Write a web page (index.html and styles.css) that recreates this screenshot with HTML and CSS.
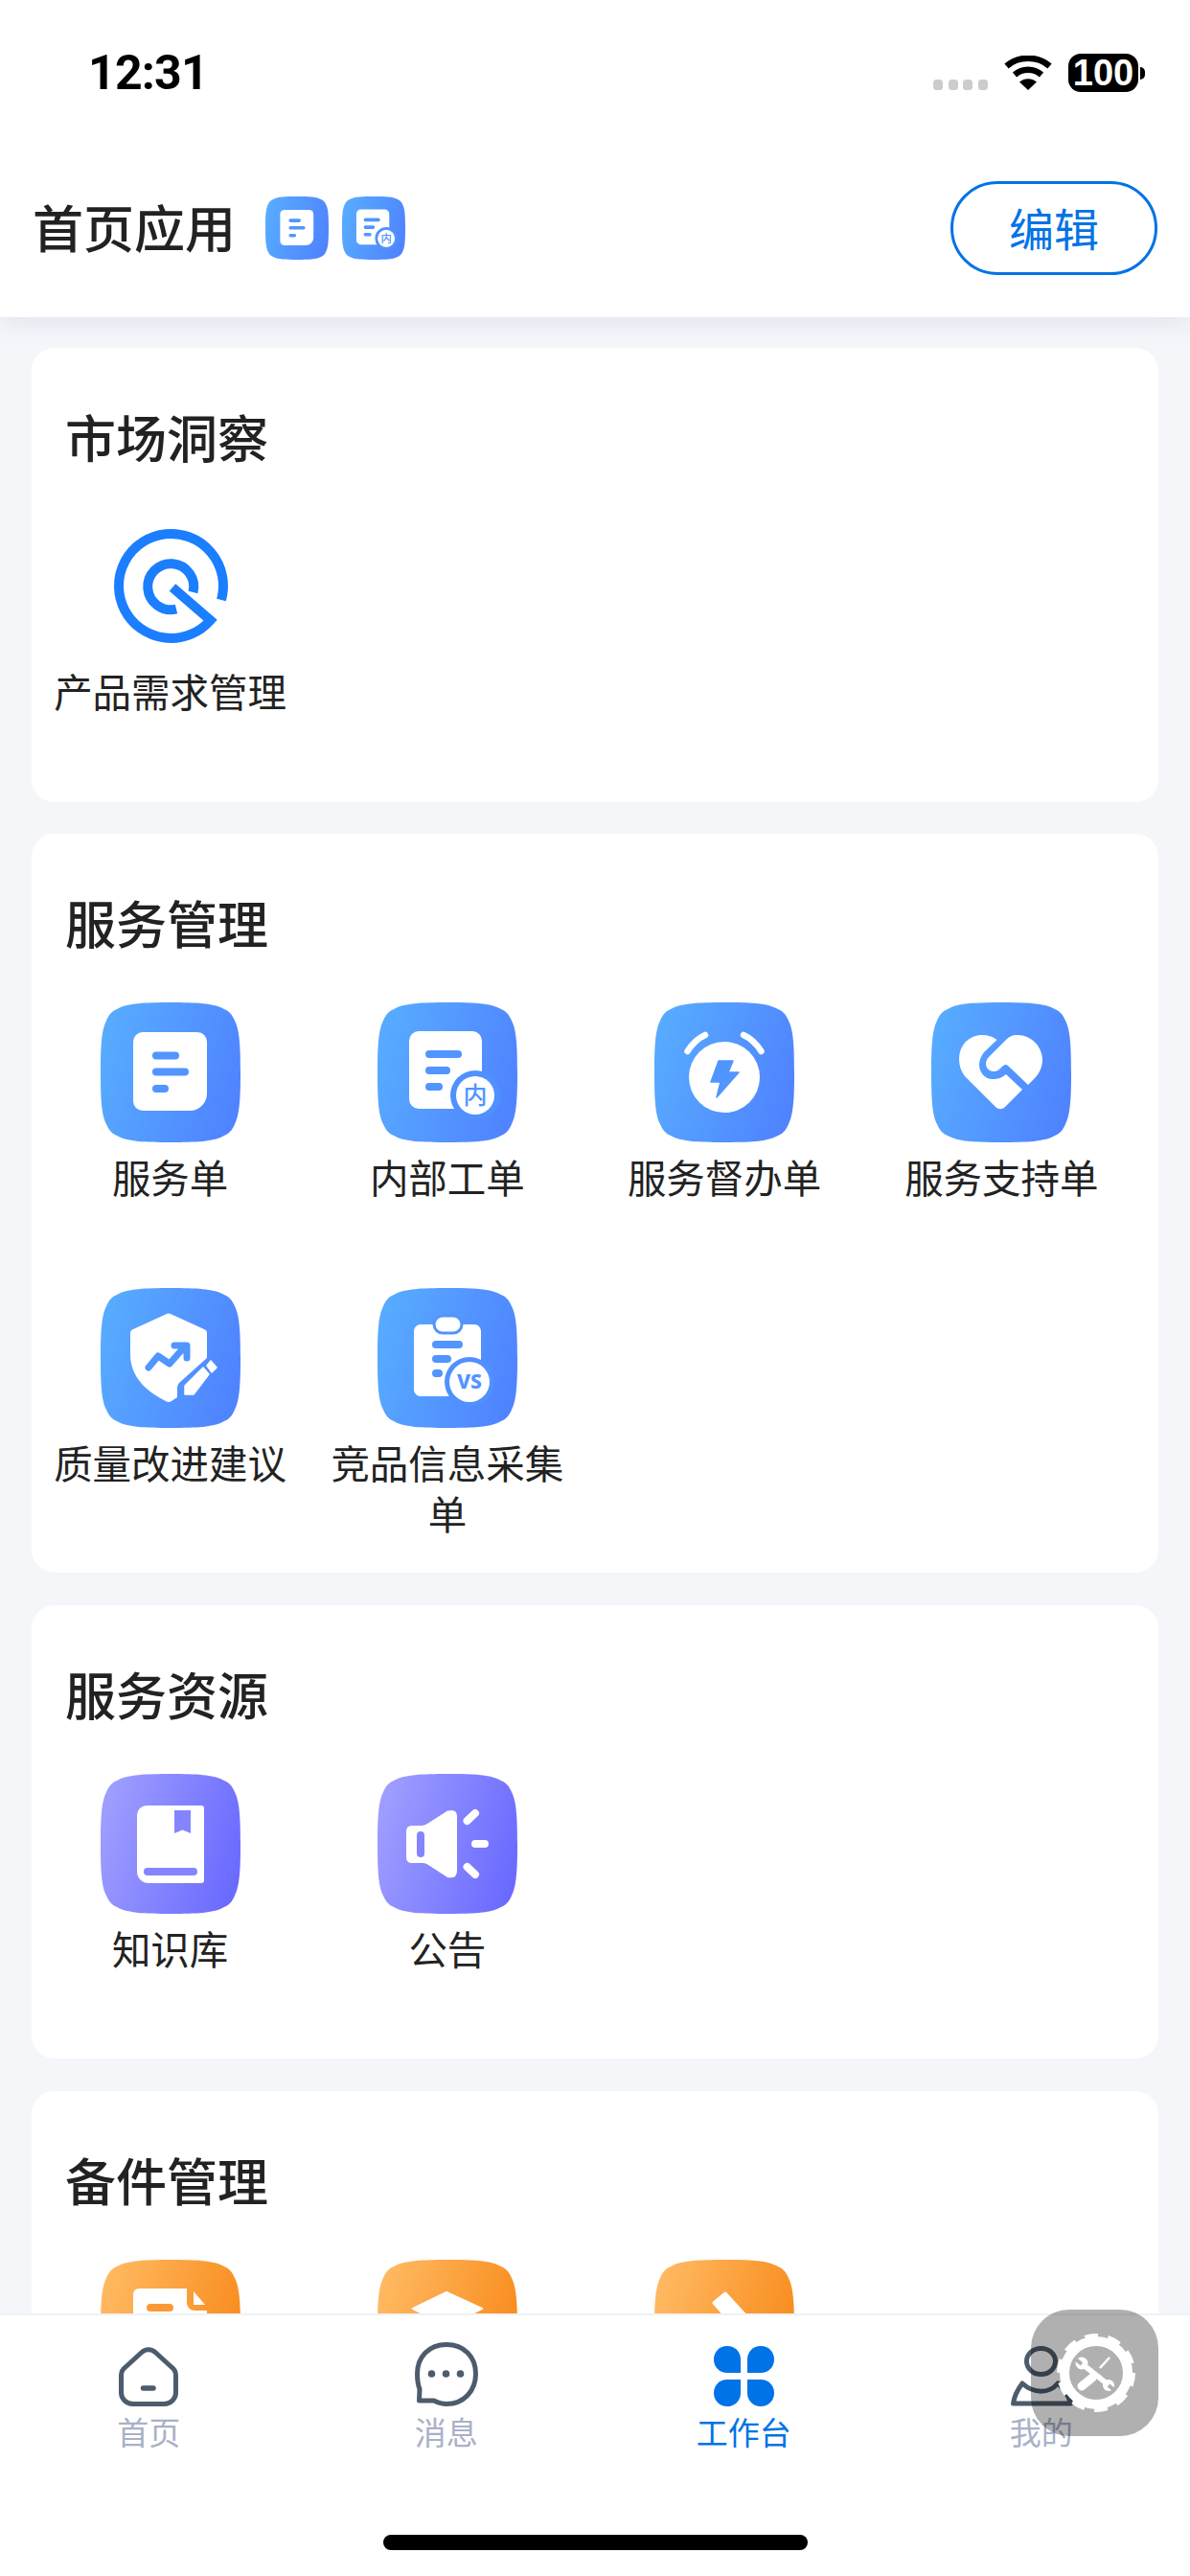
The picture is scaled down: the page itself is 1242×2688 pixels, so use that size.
FILE: index.html
```html
<!DOCTYPE html>
<html lang="zh-CN">
<head>
<meta charset="utf-8">
<title>工作台</title>
<link rel="stylesheet" href="styles.css">
</head>
<body>
<svg class="defs" aria-hidden="true">
  <defs>
    <linearGradient id="g-blue" x1="0" y1="0.35" x2="1" y2="0.65"><stop offset="0" stop-color="#57abff"/><stop offset="1" stop-color="#4f83ff"/></linearGradient>
    <linearGradient id="g-purple" x1="0" y1="0.35" x2="1" y2="0.65"><stop offset="0" stop-color="#9e9dff"/><stop offset="1" stop-color="#6a6aff"/></linearGradient>
    <linearGradient id="g-orange" x1="0" y1="0.35" x2="1" y2="0.65"><stop offset="0" stop-color="#ffb860"/><stop offset="1" stop-color="#f88a1b"/></linearGradient>
    <path id="sq" d="M73 0C101 0 117 1 127 6C134 9 137 12 140 19C145 29 146 45 146 73C146 101 145 117 140 127C137 134 134 137 127 140C117 145 101 146 73 146C45 146 29 145 19 140C12 137 9 134 6 127C1 117 0 101 0 73C0 45 1 29 6 19C9 12 12 9 19 6C29 1 45 0 73 0Z"/>
    <symbol id="s-doc" viewBox="0 0 146 146">
      <use href="#sq" fill="url(#g-blue)"/>
      <path d="M44 31H101a10 10 0 0 1 10 10V95a18 18 0 0 1-18 18H44a10 10 0 0 1-10-10V41a10 10 0 0 1 10-10Z" fill="#fff"/>
      <path d="M58 55.500H78M58 72.500H88M58 90H67" stroke="#5195ff" stroke-width="8" stroke-linecap="round" fill="none"/>
    </symbol>
    <symbol id="s-inner" viewBox="0 0 146 146">
      <use href="#sq" fill="url(#g-blue)"/>
      <path d="M43 30H99a10 10 0 0 1 10 10V100H90V111H43a10 10 0 0 1-10-10V40a10 10 0 0 1 10-10Z" fill="#fff"/>
      <path d="M54 54H84M54 71H72M54 88H64" stroke="#5195ff" stroke-width="8" stroke-linecap="round" fill="none"/>
      <circle cx="102" cy="97" r="26" fill="#5091ff"/>
      <circle cx="102" cy="97" r="20" fill="#fff"/>
      <text x="102" y="106" class="badge-cn">内</text>
    </symbol>
    <symbol id="s-alarm" viewBox="0 0 146 146">
      <use href="#sq" fill="url(#g-blue)"/>
      <circle cx="73" cy="78" r="37" fill="#fff"/>
      <path d="M34.500 51Q42 39 53 34M93 34Q104 39 111.500 51" stroke="#fff" stroke-width="6.500" stroke-linecap="round" fill="none"/>
      <path d="M67 61H82L77 73H88L65 99L69 83H59Z" fill="#5195ff" stroke="#5195ff" stroke-width="1.500" stroke-linejoin="round"/>
    </symbol>
    <symbol id="s-heart" viewBox="0 0 146 146">
      <use href="#sq" fill="url(#g-blue)"/>
      <path d="M68.500 39C64 35.500 59 34 53 34C39 34 29 45 29 59C29 66 31 72 35 77L67 109C70 112 74 112 77 109L95 91L78 75C73 79 70 80 64 80C55 80 50 72 50 65C50 60 52 56 55 52Z" fill="#fff"/>
      <path d="M78 39C81 36 84 34 90 34C104 34 116 46 116 60C116 68 112 75 108 79L101 86L80 66C78 64 76 65 74 67C71 70 69 72 65 72C60 72 57 68 57 64C57 61 58 59 60 57Z" fill="#fff"/>
    </symbol>
    <symbol id="s-shield" viewBox="0 0 146 146">
      <use href="#sq" fill="url(#g-blue)"/>
      <path d="M69 27Q71 26 73 27L108 43Q111 44 111 47V73L82 99Q80 101 80 104V114L74 118Q71 120 68 118C48 108 31 93 31 69V47Q31 44 34 43Z" fill="#fff"/>
      <path d="M50 83L60 71L72 79L87 62M77 60H90V73" stroke="#5195ff" stroke-width="7" stroke-linecap="round" stroke-linejoin="round" fill="none"/>
      <path d="M88 102L107 83L113 90L97 111H88Z" fill="#fff" stroke="#fff" stroke-width="1.500" stroke-linejoin="round"/>
      <path d="M111 81L115 76L121 83L116 88Z" fill="#fff" stroke="#fff" stroke-width="1.500" stroke-linejoin="round"/>
    </symbol>
    <symbol id="s-vs" viewBox="0 0 146 146">
      <use href="#sq" fill="url(#g-blue)"/>
      <rect x="38" y="38" width="70" height="75" rx="7" fill="#fff"/>
      <rect x="59" y="29" width="29" height="18" rx="9" fill="#fff" stroke="#5195ff" stroke-width="3"/>
      <path d="M61 59H85M61 74H73M61 89H64" stroke="#5195ff" stroke-width="8" stroke-linecap="round" fill="none"/>
      <circle cx="96" cy="98" r="26" fill="#5091ff"/>
      <circle cx="96" cy="98" r="21" fill="#fff"/>
      <text x="96" y="105" class="badge-vs">VS</text>
    </symbol>
    <symbol id="s-book" viewBox="0 0 146 146">
      <use href="#sq" fill="url(#g-purple)"/>
      <path d="M48 33H105a3 3 0 0 1 3 3V111a3 3 0 0 1-3 3H50a12 12 0 0 1-12-12V43a10 10 0 0 1 10-10Z" fill="#fff"/>
      <path d="M77 38H94V62L85.500 58.500L77 62Z" fill="#8584ff"/>
      <rect x="45" y="98" width="56" height="8" rx="4" fill="#8584ff"/>
    </symbol>
    <symbol id="s-speaker" viewBox="0 0 146 146">
      <use href="#sq" fill="url(#g-purple)"/>
      <path d="M36 54H46Q49 54 52 52L73 38.500Q83 36 83 44V101Q83 110 73 108L53 95Q51 93 47 93H36Q30 93 30 87V60Q30 54 36 54Z" fill="#fff"/>
      <rect x="41" y="60" width="8" height="27" rx="4" fill="#8584ff"/>
      <path d="M93.500 49L102 41M102 73H112M93.500 97L102 105" stroke="#fff" stroke-width="8" stroke-linecap="round" fill="none"/>
    </symbol>
    <symbol id="s-odoc" viewBox="0 0 146 146">
      <use href="#sq" fill="url(#g-orange)"/>
      <path d="M40 30H90V45a8 8 0 0 0 8 8H111V112H40a6 6 0 0 1-6-6V36a6 6 0 0 1 6-6Z" fill="#fff"/>
      <path d="M97 33L109 47H97Z" fill="#fff"/>
      <path d="M52 50H72M52 68H92M52 86H82" stroke="#fa9a35" stroke-width="8" stroke-linecap="round" fill="none"/>
    </symbol>
    <symbol id="s-ocap" viewBox="0 0 146 146">
      <use href="#sq" fill="url(#g-orange)"/>
      <path d="M72 34L109 51L72 69L37 51Z" fill="#fff" stroke="#fff" stroke-width="2" stroke-linejoin="round"/>
      <path d="M52 66V88Q72 104 94 88V66L72 77Z" fill="#fff"/>
    </symbol>
    <symbol id="s-otool" viewBox="0 0 146 146">
      <use href="#sq" fill="url(#g-orange)"/>
      <path d="M74 35L62 45L96 84L108 72Z" fill="#fff" stroke="#fff" stroke-width="3" stroke-linejoin="round"/>
    </symbol>
  </defs>
</svg>

<div class="app">
  <header class="top">
    <div class="status">
      <span class="time">12:31</span>
      <div class="status-right">
        <div class="signal"><i></i><i></i><i></i><i></i></div>
        <svg class="wifi" viewBox="0 0 50 36">
          <path d="M2.500 11C15 0 35 0 47.500 11" fill="none" stroke="#000" stroke-width="6.500"/>
          <path d="M11 20C19 13 31 13 39 20" fill="none" stroke="#000" stroke-width="6.500"/>
          <path d="M16 27.500C21 23 29 23 34 27.500L25 36Z" fill="#000"/>
        </svg>
        <div class="battery"><span class="battery-body">100</span><span class="battery-nub"></span></div>
      </div>
    </div>
    <div class="head-row">
      <h1 class="head-title">首页应用</h1>
      <svg class="head-icon"><use href="#s-doc"/></svg>
      <svg class="head-icon second"><use href="#s-inner"/></svg>
      <button class="edit-btn">编辑</button>
    </div>
  </header>

  <main class="main">
    <section class="card">
      <h2 class="card-title">市场洞察</h2>
      <div class="grid">
        <div class="item">
          <svg class="icon" viewBox="0 0 146 146">
            <path d="M126 87A54.500 54.500 0 1 0 114.600 108.200L75 74" fill="none" stroke="#1a7eff" stroke-width="10"/>
            <path d="M96.500 79A24 24 0 1 0 79 96.500" fill="none" stroke="#1a7eff" stroke-width="10"/>
          </svg>
          <span class="label">产品需求管理</span>
        </div>
      </div>
    </section>

    <section class="card">
      <h2 class="card-title">服务管理</h2>
      <div class="grid">
        <div class="item"><svg class="icon"><use href="#s-doc"/></svg><span class="label">服务单</span></div>
        <div class="item"><svg class="icon"><use href="#s-inner"/></svg><span class="label">内部工单</span></div>
        <div class="item"><svg class="icon"><use href="#s-alarm"/></svg><span class="label">服务督办单</span></div>
        <div class="item"><svg class="icon"><use href="#s-heart"/></svg><span class="label">服务支持单</span></div>
        <div class="item"><svg class="icon"><use href="#s-shield"/></svg><span class="label">质量改进建议</span></div>
        <div class="item"><svg class="icon"><use href="#s-vs"/></svg><span class="label">竞品信息采集单</span></div>
      </div>
    </section>

    <section class="card">
      <h2 class="card-title">服务资源</h2>
      <div class="grid">
        <div class="item"><svg class="icon"><use href="#s-book"/></svg><span class="label">知识库</span></div>
        <div class="item"><svg class="icon"><use href="#s-speaker"/></svg><span class="label">公告</span></div>
      </div>
    </section>

    <section class="card">
      <h2 class="card-title">备件管理</h2>
      <div class="grid">
        <div class="item"><svg class="icon"><use href="#s-odoc"/></svg></div>
        <div class="item"><svg class="icon"><use href="#s-ocap"/></svg></div>
        <div class="item"><svg class="icon"><use href="#s-otool"/></svg></div>
      </div>
    </section>
  </main>

  <footer class="tabbar">
    <nav class="tabs">
      <a class="tab">
        <span class="tab-icon">
          <svg class="ti-home" viewBox="0 0 62 62">
            <path d="M24 5.500a10 10 0 0 1 14 0L55 21a11 11 0 0 1 4.500 8.500V47a12 12 0 0 1-12 12.500H14.500A12 12 0 0 1 2.500 47V29.500A11 11 0 0 1 7 21Z" fill="none" stroke="#4c5c6c" stroke-width="5" stroke-linejoin="round"/>
            <path d="M25.500 43H36" stroke="#4c5c6c" stroke-width="5.500" stroke-linecap="round"/>
          </svg>
        </span>
        <span class="tab-label">首页</span>
      </a>
      <a class="tab">
        <span class="tab-icon">
          <svg class="ti-msg" viewBox="0 0 66 67">
            <path d="M5 49C3 44 2.500 38 2.500 33C2.500 15 15 2.500 33 2.500C51 2.500 63.500 15 63.500 33C63.500 51 51 64.500 33 64.500C28 64.500 24 63 20 61H4.500Z" fill="none" stroke="#4c5c6c" stroke-width="5" stroke-linejoin="round"/>
            <circle cx="17.500" cy="33" r="3.800" fill="#4c5c6c"/><circle cx="32.500" cy="33" r="3.800" fill="#4c5c6c"/><circle cx="47.500" cy="33" r="3.800" fill="#4c5c6c"/>
          </svg>
        </span>
        <span class="tab-label">消息</span>
      </a>
      <a class="tab active">
        <span class="tab-icon">
          <svg class="ti-grid" viewBox="0 0 63 63" fill="#0073e6">
            <path d="M14 0C22 0 28 6 28 14V28H14C6 28 0 22 0 14C0 6 6 0 14 0Z"/>
            <path d="M49 0C41 0 35 6 35 14V28H49C57 28 63 22 63 14C63 6 57 0 49 0Z"/>
            <path d="M14 63C22 63 28 57 28 49V35H14C6 35 0 41 0 49C0 57 6 63 14 63Z"/>
            <path d="M49 63C41 63 35 57 35 49V35H49C57 35 63 41 63 49C63 57 57 63 49 63Z"/>
          </svg>
        </span>
        <span class="tab-label">工作台</span>
      </a>
      <a class="tab">
        <span class="tab-icon">
          <svg class="ti-user" viewBox="0 0 66 63">
            <ellipse cx="32.500" cy="16" rx="15" ry="13.500" fill="none" stroke="#4c5c6c" stroke-width="5"/>
            <path d="M3.500 60C5 50 10 43 13 39C25 50 41 50 50 39C56 44 61 51 63.500 60Z" fill="none" stroke="#4c5c6c" stroke-width="5" stroke-linejoin="round"/>
          </svg>
        </span>
        <span class="tab-label">我的</span>
      </a>
    </nav>
    <div class="home-indicator"></div>
  </footer>

  <div class="float-btn">
    <svg class="gear" viewBox="-42 -42 84 84">
      <circle r="33" fill="none" stroke="#fff" stroke-width="10"/>
      <circle r="37.500" fill="none" stroke="#fff" stroke-width="7" stroke-dasharray="13.500 10.060"/>
      <path d="M-13 -8L11 11" stroke="#fff" stroke-width="5.500"/>
      <circle cx="-15" cy="-10" r="6.500" fill="#fff"/>
      <circle cx="13" cy="13" r="6" fill="#fff"/>
      <path d="M-21 -14L-15 -9M20 19L13 13" stroke="#b0b0b0" stroke-width="4"/>
      <path d="M14 -16L4 -5" stroke="#fff" stroke-width="2.500"/>
      <path d="M-4 5L-15 14" stroke="#fff" stroke-width="9" stroke-linecap="round"/>
    </svg>
  </div>
</div>
</body>
</html>
```

FILE: styles.css
```css
* { box-sizing: border-box; }
html, body { margin: 0; padding: 0; }
body {
  width: 1242px;
  height: 2688px;
  overflow: hidden;
  background: #f5f6fa;
  font-family: "Noto Sans CJK SC", "Noto Sans", sans-serif;
  color: #222;
}
.defs { position: absolute; width: 0; height: 0; overflow: hidden; }
.badge-cn { font-size: 25px; font-weight: 500; fill: #5195ff; text-anchor: middle; font-family: "Noto Sans CJK SC", sans-serif; }
.badge-vs { font-size: 21px; font-weight: 800; fill: #5195ff; text-anchor: middle; font-family: "Noto Sans", sans-serif; }

.app { position: relative; width: 1242px; height: 2688px; display: flex; flex-direction: column; }

.top {
  position: relative;
  z-index: 2;
  height: 331px;
  flex: none;
  background: #fff;
  box-shadow: 0 4px 26px rgba(70, 90, 150, 0.13);
}
.status {
  height: 145px;
  padding: 56px 47px 0 92px;
  display: flex;
  justify-content: space-between;
  align-items: flex-start;
}
.time {
  font-family: Roboto, "Liberation Sans", sans-serif;
  font-weight: 700;
  font-size: 50px;
  line-height: 40px;
  color: #000;
  letter-spacing: -0.8px;
}
.status-right { display: flex; align-items: flex-start; }
.signal { display: flex; gap: 5.700px; margin-top: 27px; margin-right: 17px; }
.signal i { display: block; width: 10px; height: 11px; border-radius: 3.500px; background: #ccc; }
.wifi { width: 50px; height: 36px; margin-top: 2px; margin-right: 17px; }
.battery { display: flex; align-items: center; }
.battery-body {
  width: 73px;
  height: 40px;
  border-radius: 13px;
  background: #000;
  color: #fff;
  font-family: "Liberation Sans", sans-serif;
  font-weight: 700;
  font-size: 38px;
  line-height: 41px;
  text-align: center;
}
.battery-nub { width: 5px; height: 13px; margin-left: 2px; background: #000; border-radius: 0 6px 6px 0; }

.head-row {
  height: 186px;
  padding: 0 34px 0 34px;
  display: flex;
  align-items: center;
}
.head-title { margin: 0 31px 0 0; padding-bottom: 4px; font-size: 53px; line-height: 72px; font-weight: 500; color: #222; }
.head-icon { width: 66px; height: 66px; }
.head-icon.second { margin-left: 14px; }
.edit-btn {
  margin-left: auto;
  width: 216px;
  height: 98px;
  border: 3.500px solid #0073e6;
  border-radius: 49px;
  background: #fff;
  color: #0073e6;
  font-family: inherit;
  font-size: 47px;
  padding: 0 0 4px;
}

.main {
  flex: 1;
  min-height: 0;
  overflow: hidden;
  padding: 32px 33px 0;
  display: flex;
  flex-direction: column;
  gap: 33.600px;
}
.card {
  flex: none;
  background: #fff;
  border-radius: 24px;
  padding-top: 56px;
}
.card-title {
  margin: 0 0 48px 35px;
  font-size: 53px;
  line-height: 72px;
  font-weight: 500;
  color: #222;
}
.grid {
  display: grid;
  grid-template-columns: repeat(4, 289.250px);
  grid-auto-rows: 297.500px;
}
.item { display: flex; flex-direction: column; align-items: center; }
.icon { width: 146px; height: 146px; flex: none; }
.label {
  width: 250px;
  margin-top: 9px;
  font-size: 40.500px;
  line-height: 53px;
  text-align: center;
  color: #222;
}

.tabbar {
  position: relative;
  z-index: 3;
  height: 274px;
  flex: none;
  background: #fff;
  border-top: 2px solid #f0f1f3;
  display: flex;
  flex-direction: column;
}
.tabs { display: grid; grid-template-columns: repeat(4, 1fr); padding-top: 28px; }
.tab { display: flex; flex-direction: column; align-items: center; }
.tab-icon { height: 67px; display: flex; align-items: flex-end; }
.tab-label { margin-top: 6px; font-size: 33px; line-height: 40px; color: #a9b1c7; }
.tab.active .tab-label { color: #0073e6; }
.ti-home { width: 62px; height: 62px; }
.ti-msg { width: 66px; height: 67px; }
.ti-grid { width: 63px; height: 63px; }
.ti-user { width: 66px; height: 63px; }
.home-indicator {
  align-self: center;
  width: 443px;
  height: 16px;
  margin-top: 88px;
  border-radius: 8px;
  background: #000;
}

.float-btn {
  position: absolute;
  z-index: 4;
  left: 1076px;
  top: 2410px;
  width: 133px;
  height: 132px;
  border-radius: 40px;
  background: rgba(0, 0, 0, 0.31);
}
.gear { position: absolute; left: 26px; top: 24px; width: 84px; height: 84px; }
```
